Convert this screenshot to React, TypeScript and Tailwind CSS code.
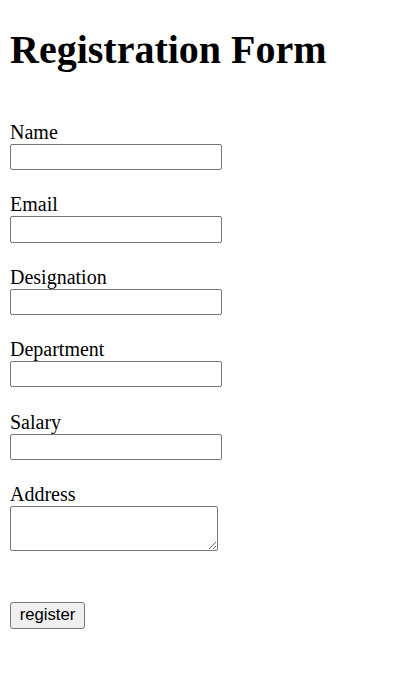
import React from "react";

const fields = ["Name", "Email", "Designation", "Department", "Salary"];

export default function App() {
  return (
    <div className="min-h-[695px] bg-white px-[10px] font-['Liberation_Serif',serif] text-black">
      <h1 className="m-0 pt-[27px] text-[40px] font-bold leading-[46px]">Registration Form</h1>
      <form className="mt-[48px] flex flex-col" onSubmit={(e) => e.preventDefault()}>
        {fields.map((f) => (
          <div key={f} className="mb-[23.2px] flex flex-col">
            <label className="block text-[20px] leading-[23px]">{f}</label>
            <input
              type="text"
              className="block h-[26.2px] w-[212px] rounded-[2px] border border-[#767676] bg-white px-[2px] font-['Liberation_Sans',sans-serif] text-[16.7px] outline-none"
            />
          </div>
        ))}
        <div className="flex flex-col">
          <label className="block text-[20px] leading-[23px]">Address</label>
          <textarea className="block h-[45px] w-[208px] rounded-[2px] border border-[#767676] bg-white font-['Liberation_Mono',monospace] text-[16.7px] outline-none" />
        </div>
        <div className="mt-[51px]">
          <button
            type="submit"
            className="flex h-[27px] w-[75px] items-center justify-center rounded-[3px] border border-[#767676] bg-[#efefef] font-['Liberation_Sans',sans-serif] text-[16.7px] leading-none text-black"
          >
            register
          </button>
        </div>
      </form>
    </div>
  );
}
